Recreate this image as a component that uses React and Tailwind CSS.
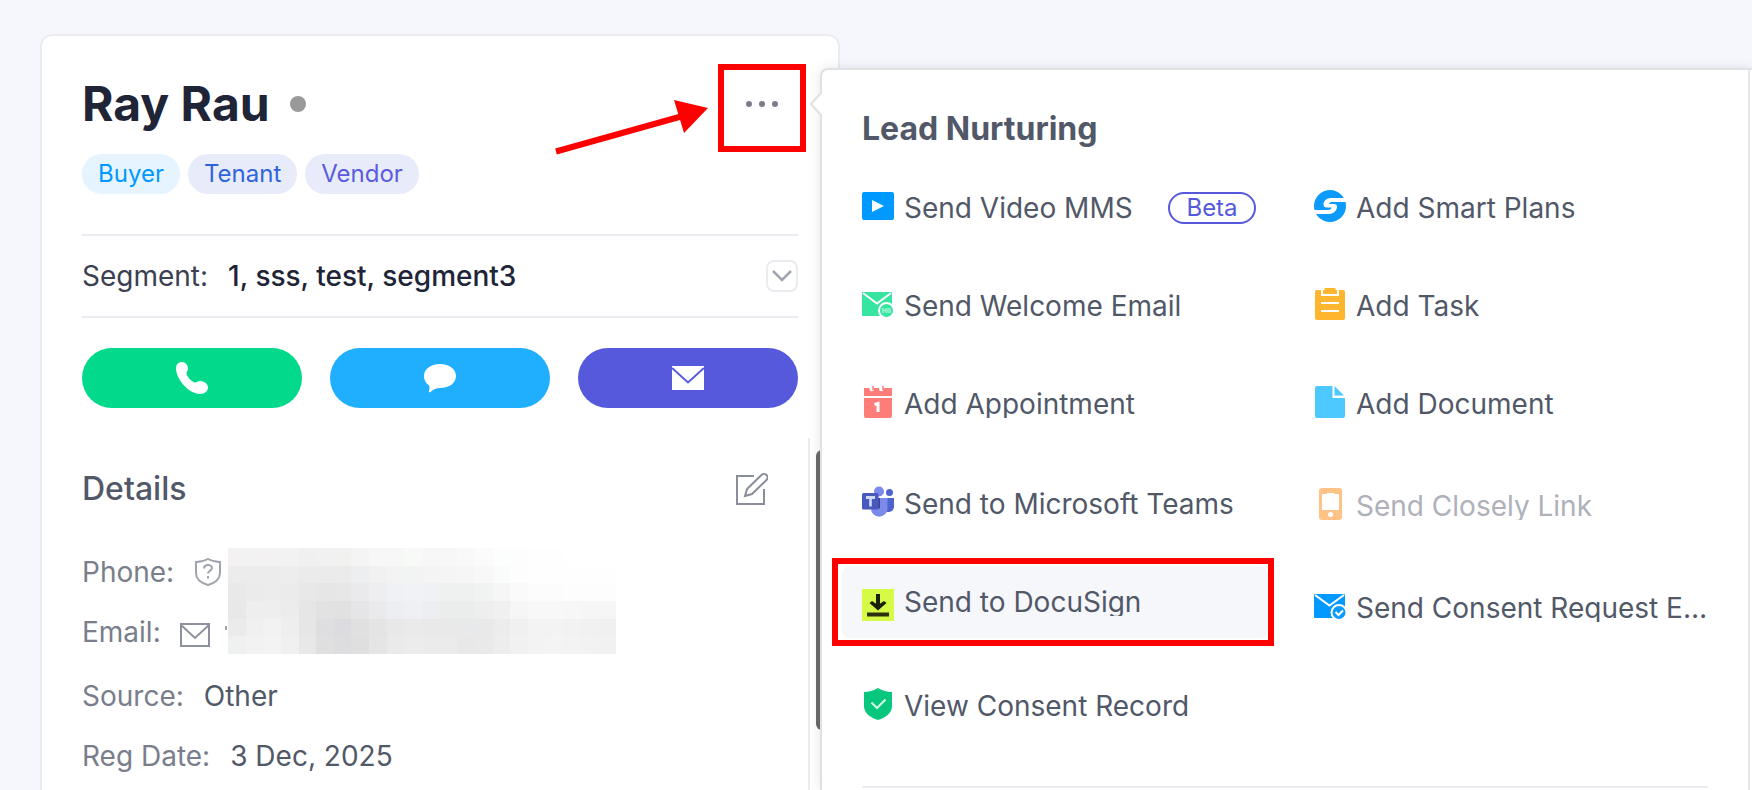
import { Fragment } from 'react';

const tags = [
  { label: 'Buyer', className: 'bg-[#e6f4ff] text-[#0099ff]' },
  { label: 'Tenant', className: 'bg-[#e8ecfa] text-[#3064dd]' },
  { label: 'Vendor', className: 'bg-[#e8ecfa] text-[#5b5bdf]' },
];

// Masked contact values, one grey tone per block
const mosaic = [
  'f3f1f2 f3f2f3 f3f1f2 f3f2f2 f1f0f0 f1f1f1 f1f1f0 f4f4f4 f7f7f7 f7f7f7 f8faf8 f7f7f7 f7f7f7 f9f9f9 fafbfa fcfefd fdfdfd fefefe fefefe ffffff ffffff ffffff',
  'ececec ececec ececec ededed ebebeb ebebeb ebebeb eceef0 f1f1f2 f3f3f3 f2f4f4 f4f4f4 f5f5f5 f6f6f6 f8f8f8 fafbfb fdfdfd fefefe fefefe fefefe fefefe fefefe',
  'e9e9e9 ebebeb ececec ebebeb e8e8e8 e6e6e6 e7e7e7 eaeaed eeeef0 eff1f5 f0f2f6 eff1f5 eef1f0 eef1f0 f1f3f2 f6f6f6 fafafa fcfcfc fcfcfc fdfdfd fdfdfd fdfdfd',
  'e8e8e8 eeeeee eeeeee ececec e6e6e6 e2e2e2 e1e1e2 e5e5e7 eaeaec eceef2 eef0f4 eceef1 ebedec ebedec eeeeee f0f0f0 f6f6f6 f8f8f8 f8f8f8 f7f7f7 f6f6f6 f6f6f6',
  'ebebeb f0f0f0 f2f2f2 eeeeee e6e6e6 dedee0 dcdce0 e0e0e1 e4e4e4 e8e8e8 eaeaea e9e9ea e9e9ea e8e9ea e9e9e9 ececec f0f0f0 f3f3f3 f3f3f3 f2f2f2 f1f1f1 f0f0f0',
  'eef1ef f2f2f2 f3f3f3 f0f0f0 e8e8e8 dfdfe0 dddde0 dfdfdf e5e5e5 eaeaea ececec ebebeb ebebeb e8e8e8 e9e9e9 ededed f1f1f1 f3f3f3 f4f4f4 f3f3f3 f2f2f2 f1f1f1',
].map((row) => row.split(' '));

function VideoIcon() {
  return (
    <svg className="h-8 w-8" viewBox="0 0 32 32">
      <rect y="2" width="32" height="28" rx="2" fill="#0099ff" />
      <path d="M10 10l12 6-12 6z" fill="#fff" />
    </svg>
  );
}

function WelcomeIcon() {
  return (
    <svg className="h-8 w-8" viewBox="0 0 32 32" fill="none">
      <path d="M0 4h30v24H0z" fill="#36e6a0" />
      <path d="M1 5l14 10.500L29 5" stroke="#fff" strokeWidth="2" />
      <circle cx="24.500" cy="22.500" r="7.500" fill="#36e6a0" stroke="#fff" strokeWidth="2" />
      <path d="M21 20v5M21 22.500h3M24 20v5M28 20v5M26 20v5" stroke="#b6f6dc" strokeWidth="1.200" />
    </svg>
  );
}

function CalendarIcon() {
  return (
    <svg className="h-8 w-8" viewBox="0 0 32 32" fill="none">
      <path
        d="M2 2h5.500v1a2.200 2.200 0 004.500 0V2h5v1a2.200 2.200 0 004.500 0V2H30v8H2z"
        fill="#ff7d78"
      />
      <path d="M2 12h28v18a2 2 0 01-2 2H4a2 2 0 01-2-2z" fill="#ff7d78" />
      <path d="M11 0v4M21 0v4" stroke="#ff7d78" strokeWidth="1.500" />
      <path d="M12.500 18.500l3.500-1v8.500" stroke="#fff" strokeWidth="3" />
    </svg>
  );
}

function TeamsIcon() {
  return (
    <svg className="h-8 w-8" viewBox="0 0 32 32">
      <circle cx="27.500" cy="6.500" r="3.500" fill="#4f63cf" />
      <path d="M21 12h11v8.500a5.500 5.500 0 01-8 5z" fill="#4f63cf" />
      <circle cx="17" cy="5.500" r="5" fill="#7b8aeb" />
      <path d="M9 12h16.500v10.500a8.200 8.200 0 01-16.500 0z" fill="#7b8aeb" />
      <path d="M9 12h9v10.500H9.500z" fill="#3a4798" />
      <rect y="7" width="16.500" height="16.500" rx="1.500" fill="#4858bd" />
      <path d="M4 10h9v3H9.800v7.500H7.200V13H4z" fill="#d3d9f5" />
    </svg>
  );
}

function DocuSignIcon() {
  return (
    <svg className="h-8 w-8" viewBox="0 0 32 32" fill="none">
      <path d="M0 0h32v32H0z" fill="#d5fb46" />
      <path d="M16 5v13" stroke="#1b2108" strokeWidth="4" />
      <path d="M7.500 14l2.500-2 6 4 6-4 2.500 2L16 21.500z" fill="#1b2108" />
      <path d="M5 25.500h22" stroke="#2a310c" strokeWidth="4" />
    </svg>
  );
}

function ShieldCheckIcon() {
  return (
    <svg className="h-8 w-8" viewBox="0 0 32 32" fill="none">
      <path d="M16 0c4.500 2.800 9 4 14 4v14c0 7-6 11.500-14 14C8 29.500 2 25 2 18V4c5 0 9.500-1.200 14-4z" fill="#06c77c" />
      <path d="M9.500 14.500l5.500 5.500 8.500-8.500" stroke="#d4f6e7" strokeWidth="2" />
    </svg>
  );
}

function SmartPlansIcon() {
  return (
    <svg className="h-8 w-8" viewBox="0 0 32 32">
      <circle cx="16" cy="16" r="16" fill="#0c9bfd" />
      <path
        d="M32 8H18c-5 0-8 2-8.500 6-.3 2.500 1 3.500 3.500 3.500h4.500c-.5 1.800-1.500 2.500-3.500 2.500H0v4h14c5.500 0 8-2.500 9-6.500.5-2.300-.8-3.500-3-3.500h-5c.5-1.500 1.500-2 3.500-2H32z"
        fill="#fff"
      />
    </svg>
  );
}

function TaskIcon() {
  return (
    <svg className="h-8 w-8" viewBox="0 0 32 32" fill="none">
      <rect x="1" y="2" width="30" height="30" rx="2" fill="#ffb52e" />
      <path d="M8 2v5h16V2" stroke="#fff" strokeWidth="2" />
      <rect x="10.500" width="11" height="6" rx="1" fill="#ffb52e" />
      <path d="M7 15h18M7 23h18" stroke="#fff" strokeWidth="2" />
    </svg>
  );
}

function DocumentIcon() {
  return (
    <svg className="h-8 w-8" viewBox="0 0 32 32">
      <path d="M1 2a2 2 0 012-2h15.500v12H31v18a2 2 0 01-2 2H3a2 2 0 01-2-2z" fill="#4dc9ff" />
      <path d="M20.500 0L30 9.500h-9.500z" fill="#4dc9ff" />
    </svg>
  );
}

function PhoneDeviceIcon() {
  return (
    <svg className="h-8 w-8" viewBox="0 0 32 32">
      <rect x="5" width="23" height="32" rx="3" fill="#ffc387" />
      <path d="M8 6h5V5h7v1h5v16H8z" fill="#fff" />
      <circle cx="16.500" cy="26.500" r="2.500" fill="#fff" />
    </svg>
  );
}

function ConsentMailIcon() {
  return (
    <svg className="h-8 w-8" viewBox="0 0 32 32" fill="none">
      <rect y="4" width="31" height="24" rx="1" fill="#0099ff" />
      <path d="M1 5l14.500 10.500L30 5" stroke="#fff" strokeWidth="2" />
      <circle cx="25" cy="22.500" r="7.500" fill="#0c9bfd" stroke="#fff" strokeWidth="2" />
      <path d="M21.500 22l3 3 4.500-4.500" stroke="#fff" strokeWidth="2" />
    </svg>
  );
}

const leftActions = [
  { label: 'Send Video MMS', icon: VideoIcon, badge: 'Beta' },
  { label: 'Send Welcome Email', icon: WelcomeIcon },
  { label: 'Add Appointment', icon: CalendarIcon },
  { label: 'Send to Microsoft Teams', icon: TeamsIcon, className: 'mt-0.5' },
  { label: 'Send to DocuSign', icon: DocuSignIcon, active: true },
  { label: 'View Consent Record', icon: ShieldCheckIcon, className: 'mt-1.5' },
];

const rightActions = [
  { label: 'Add Smart Plans', icon: SmartPlansIcon },
  { label: 'Add Task', icon: TaskIcon },
  { label: 'Add Document', icon: DocumentIcon },
  { label: 'Send Closely Link', icon: PhoneDeviceIcon, disabled: true, className: 'mt-1' },
  { label: 'Send Consent Request Email', icon: ConsentMailIcon, className: 'mt-1' },
];

function ActionItem({ action }) {
  const Icon = action.icon;
  return (
    <li className={`relative ${action.className || ''}`}>
      <button
        type="button"
        disabled={action.disabled}
        className={`flex h-[72px] w-full items-center gap-2.5 rounded-lg pl-5 text-left ${
          action.active ? 'bg-[#f6f7fb]' : ''
        } ${action.disabled ? 'text-[#aeb1b9]' : 'text-[#515868]'}`}
      >
        <span className={`shrink-0 ${action.active ? 'mt-1.5' : 'mb-1'}`}>
          <Icon />
        </span>
        <span className="truncate text-[28px] leading-7">{action.label}</span>
        {action.badge && (
          <span className="mr-3 ml-auto flex h-8 w-[88px] shrink-0 items-center justify-center rounded-full border-2 border-[#5659db] text-2xl leading-7 text-[#5659db]">
            {action.badge}
          </span>
        )}
      </button>
      {action.active && (
        <div className="pointer-events-none absolute -top-2 -right-1.5 -bottom-2 -left-2.5 border-6 border-[#ff0000]" />
      )}
    </li>
  );
}

function Mosaic() {
  return (
    <svg className="h-[106px] w-[388px]" viewBox="0 0 22 6" preserveAspectRatio="none" shapeRendering="crispEdges">
      {mosaic.map((row, y) => (
        <Fragment key={y}>
          {row.map((tone, x) => (
            <rect key={x} x={x} y={y} width="1.02" height="1.02" fill={`#${tone}`} />
          ))}
        </Fragment>
      ))}
    </svg>
  );
}

function ContactCard() {
  return (
    <section className="relative flex w-[800px] shrink-0 flex-col rounded-t-xl border-2 border-b-0 border-[#ebecf1] bg-white">
      <div className="px-10 pt-[34px]">
        <header className="flex items-center justify-between">
          <div className="flex items-center gap-5">
            <h1 className="text-5xl leading-[68px] font-bold text-[#202437]">Ray Rau</h1>
            <span className="h-4 w-4 rounded-full bg-[#999999]" />
          </div>
          <div className="relative">
            <button type="button" aria-label="More actions" className="flex h-8 w-[72px] items-center justify-center">
              <svg className="h-8 w-8" viewBox="0 0 32 32" fill="#797e8b">
                <circle cx="3" cy="16" r="3" />
                <circle cx="16" cy="16" r="3" />
                <circle cx="29" cy="16" r="3" />
              </svg>
            </button>
            <div className="pointer-events-none absolute -top-6 -right-2 h-[88px] w-[88px] border-6 border-[#ff0000]" />
            <svg className="pointer-events-none absolute top-3 right-[90px] h-14 w-[154px]" viewBox="0 0 154 56">
              <path d="M2 51.500L127 16.500" stroke="#ff0000" strokeWidth="6" />
              <path d="M120 0l34 8-24 25z" fill="#ff0000" />
            </svg>
          </div>
        </header>

        <ul className="mt-4 flex gap-2">
          {tags.map((tag) => (
            <li key={tag.label} className={`flex h-10 items-center rounded-full px-4 text-2xl ${tag.className}`}>
              {tag.label}
            </li>
          ))}
        </ul>

        <div className="mt-10 flex h-[84px] items-center border-y-2 border-[#ebecf1] text-[28px] text-[#202437]">
          <span className="text-[#3b4052]">Segment:</span>
          <span className="ml-5 font-medium">1, sss, test, segment3</span>
          <button
            type="button"
            aria-label="Expand segments"
            className="ml-auto flex h-8 w-8 items-center justify-center rounded-lg border-2 border-[#ebecf1]"
          >
            <svg className="h-5 w-5 shrink-0" viewBox="0 0 20 20" fill="none" stroke="#a0a4af" strokeWidth="2.500">
              <path d="M1 5l9 9 9-9" />
            </svg>
          </button>
        </div>

        <div className="mt-[30px] grid grid-cols-3 gap-7">
          <button type="button" aria-label="Call" className="flex h-[60px] items-center justify-center rounded-full bg-[#02d98b]">
            <svg className="h-8 w-8" viewBox="0 0 32 32" fill="#fff">
              <path d="M6 0c3.500 0 6 3 6 6.500 0 2.500-2 3.500-1.500 5.500.8 3 6 8.500 8.500 8.500 1.500 0 3-1.500 5.500-1.500 4 0 7.500 3 7.500 6.500s-3 6.500-8 6.500C13 32 0 17 0 6.500 0 2.500 2.500 0 6 0z" />
            </svg>
          </button>
          <button type="button" aria-label="Text" className="flex h-[60px] items-center justify-center rounded-full bg-[#20aeff]">
            <svg className="h-8 w-8" viewBox="0 0 32 32" fill="#fff">
              <path d="M16 2c9.500 0 16 5 16 12s-6.500 12-16 12c-3.500 0-6.500 1.500-9.500 4-1.500.8-2 0-1.500-1.500.5-1.500 1-3.500 0-5C1.500 21 0 18 0 14 0 7 6.500 2 16 2z" />
            </svg>
          </button>
          <button type="button" aria-label="Email" className="flex h-[60px] items-center justify-center rounded-full bg-[#5659db]">
            <svg className="h-8 w-8" viewBox="0 0 32 32" fill="none">
              <path d="M0 4h32v24H0z" fill="#fff" />
              <path d="M0 6l16 14.500L32 6" stroke="#5659db" strokeWidth="2" />
            </svg>
          </button>
        </div>
      </div>

      <div className="relative mt-[30px] mr-[28px] flex-1 border-r-2 border-[#ebecf1] px-10">
        <div className="flex items-center justify-between pt-7">
          <h2 className="text-[32px] leading-[46px] font-medium text-[#515868]">Details</h2>
          <button type="button" aria-label="Edit details">
            <svg className="h-8 w-8" viewBox="0 0 32 32" fill="none" stroke="#8a8e9a" strokeWidth="2">
              <path d="M18 3H1v28h27V16" />
              <path d="M9 23l2-7L25.500 2a3.400 3.400 0 015 5L16 21z" />
            </svg>
          </button>
        </div>
        <dl className="mt-[30px] flex flex-col text-[28px] leading-[60px] text-[#797e8b]">
          <div className="flex items-center">
            <dt>Phone:</dt>
            <dd className="ml-5">
              <svg className="h-7 w-7" viewBox="0 0 28 28" fill="none" stroke="#a0a4af" strokeWidth="2">
                <path d="M14 1c3.500 2 7.500 3 12 3v11c0 6-5 10-12 12C7 25 2 21 2 15V4c4.500 0 8.500-1 12-3z" />
                <path d="M10 10.500c0-4.500 8-4.500 8-.5 0 2.500-4 3-4 5.500M14 18v2.500" />
              </svg>
            </dd>
          </div>
          <div className="flex items-center">
            <dt>Email:</dt>
            <dd className="mt-1 ml-[18px] flex items-center gap-3.5">
              <svg className="h-8 w-8" viewBox="0 0 32 32" fill="none" stroke="#8d919d" strokeWidth="2">
                <path d="M2 6h28v22H2z" />
                <path d="M2 7l14 13L30 7" />
              </svg>
              <span className="mb-3 h-1 w-0.5 bg-[#a0a4af]" />
            </dd>
          </div>
          <div className="mt-1 flex items-center">
            <dt>Source:</dt>
            <dd className="ml-5 text-[#515868]">Other</dd>
          </div>
          <div className="flex items-center">
            <dt>Reg Date:</dt>
            <dd className="ml-5 text-[#515868]">3 Dec, 2025</dd>
          </div>
        </dl>
        <div className="absolute top-[110px] left-[186px]">
          <Mosaic />
        </div>
        <div className="absolute top-3 -right-5 h-[280px] w-3 rounded-full bg-[#6b6b6b]" />
      </div>
    </section>
  );
}

function ActionMenu() {
  return (
    <section className="relative z-10 mt-[34px] -ml-5 min-w-0 flex-1 rounded-tl-lg border-t-2 border-l-2 border-[#e0e1e7] bg-white pr-0.5 shadow-[0_0_12px_rgba(0,0,0,0.1)]">
      <svg className="absolute top-[22px] -left-3 h-6 w-3" viewBox="0 0 12 24" fill="#fff">
        <path d="M12 1L1 12l11 11z" />
        <path d="M11 1L1 12l10 11" fill="none" stroke="#e0e1e7" strokeWidth="2" />
      </svg>
      <div className="h-full border-r-2 border-[#e6e6ea] pr-10 pl-5">
        <h2 className="ml-5 pt-9 text-[32px] leading-[46px] font-bold text-[#515868]">Lead Nurturing</h2>
        <div className="mt-5 flex gap-[26px]">
          <ul className="flex w-[426px] shrink-0 flex-col gap-[26px]">
            {leftActions.map((action) => (
              <ActionItem key={action.label} action={action} />
            ))}
          </ul>
          <ul className="flex min-w-0 flex-1 flex-col gap-[26px]">
            {rightActions.map((action) => (
              <ActionItem key={action.label} action={action} />
            ))}
          </ul>
        </div>
        <hr className="mt-11 ml-5 border-t-2 border-[#ebecf1]" />
      </div>
    </section>
  );
}

function App() {
  return (
    <main className="flex h-screen items-stretch overflow-hidden bg-[#f6f7fc] pt-[34px] pl-10 font-['Inter','Liberation_Sans',sans-serif]">
      <ContactCard />
      <ActionMenu />
    </main>
  );
}

export default App;
